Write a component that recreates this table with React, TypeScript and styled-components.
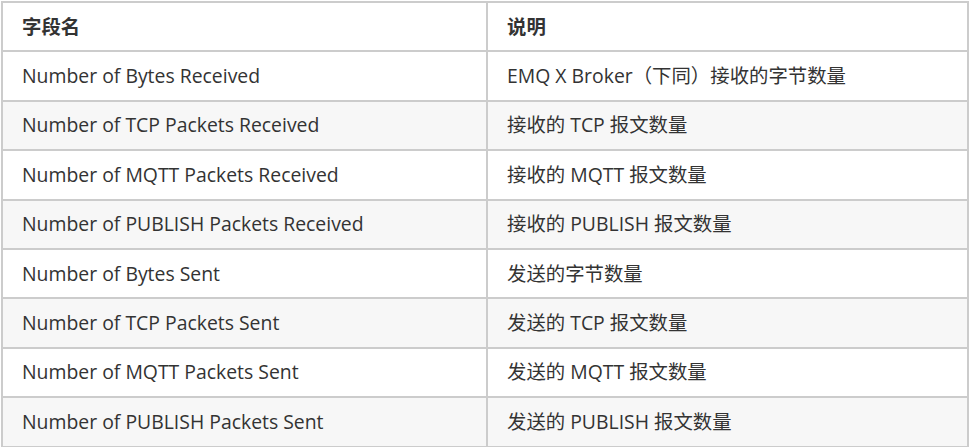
import { FunctionComponent } from 'react'
import styled, { createGlobalStyle } from 'styled-components'

const rows: [string, string][] = [
  ['Number of Bytes Received', 'EMQ X Broker（下同）接收的字节数量'],
  ['Number of TCP Packets Received', '接收的 TCP 报文数量'],
  ['Number of MQTT Packets Received', '接收的 MQTT 报文数量'],
  ['Number of PUBLISH Packets Received', '接收的 PUBLISH 报文数量'],
  ['Number of Bytes Sent', '发送的字节数量'],
  ['Number of TCP Packets Sent', '发送的 TCP 报文数量'],
  ['Number of MQTT Packets Sent', '发送的 MQTT 报文数量'],
  ['Number of PUBLISH Packets Sent', '发送的 PUBLISH 报文数量'],
]

const App: FunctionComponent = () => (
  <>
    <GlobalStyle />
    <Table>
      <colgroup>
        <col style={{ width: 485 }} />
        <col />
      </colgroup>
      <thead>
        <tr>
          <HeadCell>字段名</HeadCell>
          <HeadCell>说明</HeadCell>
        </tr>
      </thead>
      <tbody>
        {rows.map(([name, desc]) => (
          <Row key={name}>
            <Cell>{name}</Cell>
            <Cell>{desc}</Cell>
          </Row>
        ))}
      </tbody>
    </Table>
  </>
)

export default App

const GlobalStyle = createGlobalStyle`
  body {
    margin: 0;
    background: #fff;
    font-family: 'Open Sans', 'Noto Sans CJK SC', sans-serif;
    color: #333;
  }
`

const Table = styled.table`
  margin: 1px 0 0 1px;
  width: 968px;
  border-collapse: collapse;
  table-layout: fixed;
  font-size: 19.4px;
`

const Row = styled.tr`
  background: #fff;

  &:nth-child(even) {
    background: #f7f7f7;
  }
`

const Cell = styled.td`
  height: 49.4px;
  padding: 0 19px;
  border: 2px solid #cccccc;
  line-height: 26px;
  text-align: left;
  white-space: nowrap;
  box-sizing: border-box;
`

const HeadCell = styled(Cell).attrs({ as: 'th' })`
  font-weight: 700;
`
